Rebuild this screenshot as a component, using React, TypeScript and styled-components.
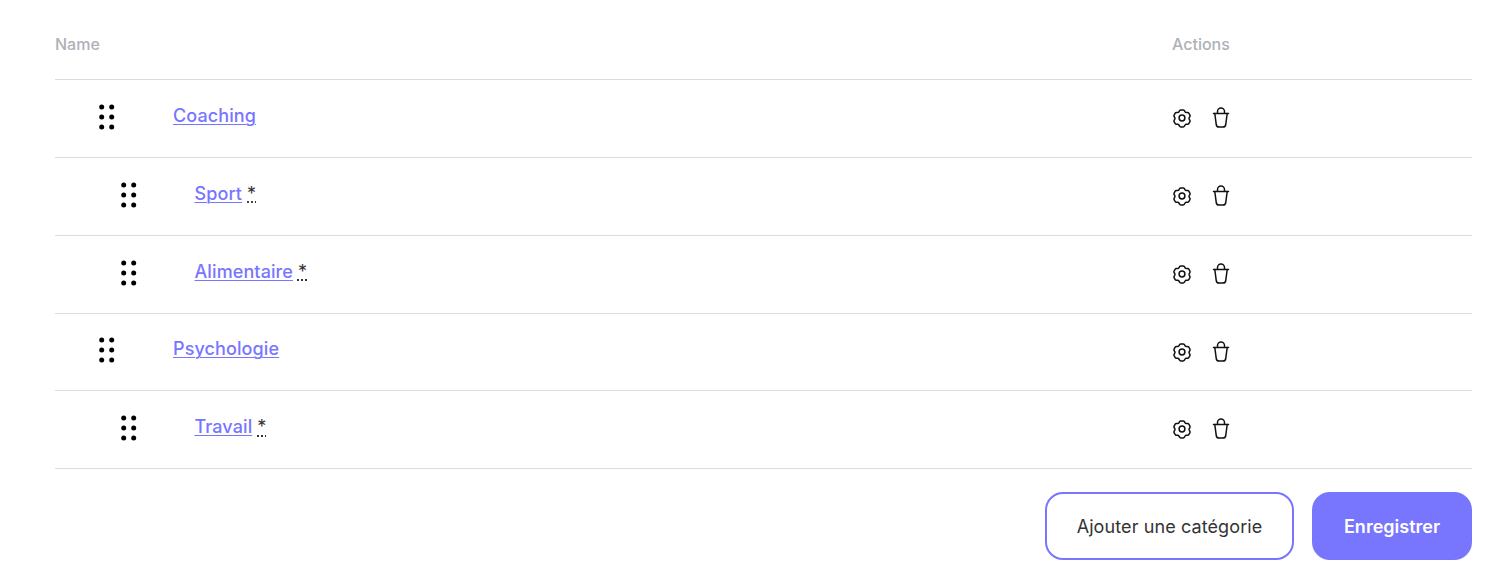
import React from "react";
import styled, { createGlobalStyle } from "styled-components";

const categories = [
  { name: "Coaching", child: false },
  { name: "Sport", child: true },
  { name: "Alimentaire", child: true },
  { name: "Psychologie", child: false },
  { name: "Travail", child: true },
];

const Global = createGlobalStyle`
  html, body {
    margin: 0;
    padding: 0;
    background: #fff;
    font-family: Inter, "Liberation Sans", sans-serif;
  }
`;

const Page = styled.div`
  width: 1508px;
  height: 583px;
  box-sizing: border-box;
  padding: 10px 36px 0 55px;
  overflow: hidden;
`;

const Head = styled.div`
  display: grid;
  grid-template-columns: 1117px 1fr;
  height: 70.25px;
  box-sizing: border-box;
  padding-bottom: 1px;
  align-items: center;
  border-bottom: 1px solid #dcdce0;
  font-size: 16px;
  font-weight: 500;
  color: #b0b0b8;
`;

const Row = styled.div`
  display: grid;
  grid-template-columns: 1117px 1fr;
  height: 77.75px;
  box-sizing: border-box;
  border-bottom: 1px solid #dcdce0;
  align-items: center;
`;

const NameCell = styled.div<{ $child: boolean }>`
  display: flex;
  align-items: center;
  padding-left: ${(p) => (p.$child ? 65.5 : 44)}px;
`;

const Handle = styled.svg`
  width: 16px;
  height: 26px;
  margin-top: -3px;
  flex: none;
  color: #000;
`;

const Label = styled.div`
  margin-left: 58px;
  margin-top: -5px;
  font-size: 18px;
  font-weight: 500;
  letter-spacing: 0.1px;
  line-height: 24px;
  display: flex;
  align-items: baseline;
  gap: 5px;
`;

const NameLink = styled.a`
  color: #7875ff;
  text-decoration: underline;
  text-underline-offset: 2px;
  text-decoration-thickness: 1px;
  cursor: pointer;
`;

const Star = styled.abbr`
  color: #333;
  font-size: 18px;
  font-weight: 400;
  text-decoration: underline dotted;
  text-underline-offset: 2px;
`;

const Actions = styled.div`
  display: flex;
  align-items: center;
  gap: 19px;
  margin-top: -0.5px;
`;

const IconBtn = styled.button`
  width: 20px;
  height: 20px;
  padding: 0;
  border: 0;
  background: none;
  color: #111;
  display: flex;
  align-items: center;
  justify-content: center;
`;

const Footer = styled.div`
  display: flex;
  justify-content: flex-end;
  gap: 18px;
  margin-top: 23px;
`;

const Button = styled.button<{ $primary?: boolean }>`
  height: 68px;
  box-sizing: border-box;
  border-radius: 18px;
  border: 2px solid #7875ff;
  font-family: Inter, "Liberation Sans", sans-serif;
  font-size: 18px;
  font-weight: ${(p) => (p.$primary ? 600 : 400)};
  letter-spacing: ${(p) => (p.$primary ? 0 : "0.1px")};
  color: ${(p) => (p.$primary ? "#fff" : "#333")};
  background: ${(p) => (p.$primary ? "#7875ff" : "#fff")};
  width: ${(p) => (p.$primary ? 160 : 249)}px;
  padding: 0;
`;

const GripIcon = () => (
  <Handle viewBox="0 0 16 26" fill="currentColor">
    {[3, 13, 23].map((y) =>
      [2.7, 12.7].map((x) => <circle key={`${x}-${y}`} cx={x} cy={y} r="2.5" />)
    )}
  </Handle>
);

const GearIcon = () => (
  <svg width="20" height="20" viewBox="0 0 20 20" fill="none" stroke="currentColor" strokeWidth="1.5" strokeLinejoin="round">
    <path d="M7.6 2.6a1.4 1.4 0 0 1 1.2-.7h2.4a1.4 1.4 0 0 1 1.2.7l.7 1.2a1.4 1.4 0 0 0 1.2.7h1.3a1.4 1.4 0 0 1 1.2.7l1.1 1.9a1.4 1.4 0 0 1 0 1.4l-.7 1.2a1.4 1.4 0 0 0 0 1.4l.7 1.2a1.4 1.4 0 0 1 0 1.4l-1.1 1.9a1.4 1.4 0 0 1-1.2.7h-1.3a1.4 1.4 0 0 0-1.2.7l-.7 1.2a1.4 1.4 0 0 1-1.2.7H8.8a1.4 1.4 0 0 1-1.2-.7l-.7-1.2a1.4 1.4 0 0 0-1.2-.7H4.4a1.4 1.4 0 0 1-1.2-.7l-1.1-1.9a1.4 1.4 0 0 1 0-1.4l.7-1.2a1.4 1.4 0 0 0 0-1.4l-.7-1.2a1.4 1.4 0 0 1 0-1.4l1.1-1.9a1.4 1.4 0 0 1 1.2-.7h1.3a1.4 1.4 0 0 0 1.2-.7z" />
    <circle cx="10" cy="10" r="2.9" />
  </svg>
);

const BinIcon = () => (
  <svg width="20" height="22" viewBox="0 0 20 22" fill="none" stroke="currentColor" strokeWidth="1.5" strokeLinecap="round" strokeLinejoin="round">
    <path d="M2.5 6.5h15" />
    <path d="M6.5 6.2V4.5a3.5 3.5 0 0 1 7 0v1.7" />
    <path d="M3.8 6.5l1.4 10.6A3 3 0 0 0 8.2 20h3.6a3 3 0 0 0 3-2.9l1.4-10.6" />
  </svg>
);

export default function App() {
  return (
    <>
      <Global />
      <Page>
        <Head>
          <div>Name</div>
          <div>Actions</div>
        </Head>
        {categories.map((c) => (
          <Row key={c.name}>
            <NameCell $child={c.child}>
              <GripIcon />
              <Label>
                <NameLink>{c.name}</NameLink>
                {c.child && <Star title="Sous-catégorie">*</Star>}
              </Label>
            </NameCell>
            <Actions>
              <IconBtn><GearIcon /></IconBtn>
              <IconBtn><BinIcon /></IconBtn>
            </Actions>
          </Row>
        ))}
        <Footer>
          <Button>Ajouter une catégorie</Button>
          <Button $primary>Enregistrer</Button>
        </Footer>
      </Page>
    </>
  );
}
